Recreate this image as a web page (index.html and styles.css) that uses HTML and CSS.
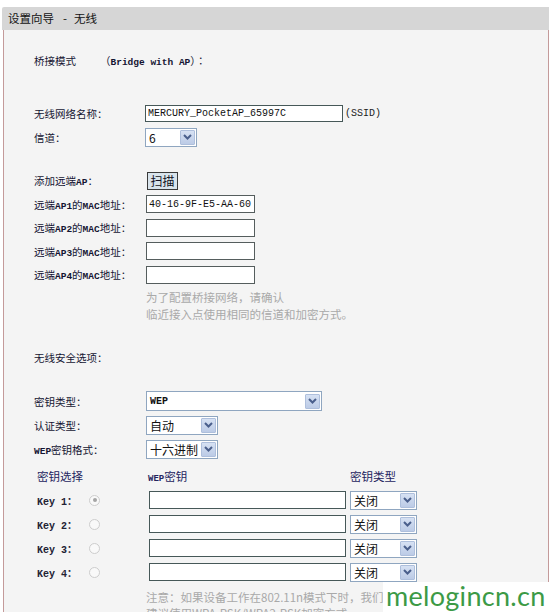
FILE: index.html
```html
<!DOCTYPE html>
<html lang="zh-CN">
<head>
<meta charset="utf-8">
<title>设置向导 - 无线</title>
<link rel="stylesheet" href="styles.css">
</head>
<body>
<div class="frame">
  <div class="header">设置向导<span class="dash">-</span>无线</div>
  <div class="panel">
    <div class="row">
      <span class="lbl lbl-title">桥接模式</span>
      <span class="bridge">（<span class="lat">Bridge with AP</span>）：</span>
    </div>

    <div class="row mt-ssid">
      <span class="lbl">无线网络名称：</span>
      <input class="txt ssid" type="text" value="MERCURY_PocketAP_65997C">
      <span class="suffix">(SSID)</span>
    </div>
    <div class="row">
      <span class="lbl">信道：</span>
      <div class="sel sel-ch"><span class="val">6</span><span class="btn"><svg width="9" height="6" viewBox="0 0 9 6"><path d="M1 1 L4.5 4.5 L8 1" fill="none" stroke="#4a5f8c" stroke-width="2"/></svg></span></div>
    </div>

    <div class="row row-s mt-scan">
      <span class="lbl">添加远端<span class="lat">AP</span>：</span>
      <span class="scan">扫描</span>
    </div>
    <div class="row row-s">
      <span class="lbl">远端<span class="lat">AP1</span>的<span class="lat">MAC</span>地址：</span>
      <input class="txt mac" type="text" value="40-16-9F-E5-AA-60">
    </div>
    <div class="row row-s">
      <span class="lbl">远端<span class="lat">AP2</span>的<span class="lat">MAC</span>地址：</span>
      <input class="txt mac" type="text" value="">
    </div>
    <div class="row row-s">
      <span class="lbl">远端<span class="lat">AP3</span>的<span class="lat">MAC</span>地址：</span>
      <input class="txt mac" type="text" value="">
    </div>
    <div class="row row-s">
      <span class="lbl">远端<span class="lat">AP4</span>的<span class="lat">MAC</span>地址：</span>
      <input class="txt mac" type="text" value="">
    </div>
    <div class="hint">
      <div>为了配置桥接网络，请确认</div>
      <div>临近接入点使用相同的信道和加密方式。</div>
    </div>

    <div class="row mt-sec">
      <span class="lbl">无线安全选项：</span>
    </div>

    <div class="row mt-type">
      <span class="lbl">密钥类型：</span>
      <div class="sel sel-wep"><span class="val val-lat">WEP</span><span class="btn"><svg width="9" height="6" viewBox="0 0 9 6"><path d="M1 1 L4.5 4.5 L8 1" fill="none" stroke="#4a5f8c" stroke-width="2"/></svg></span></div>
    </div>
    <div class="row">
      <span class="lbl">认证类型：</span>
      <div class="sel sel-mid"><span class="val">自动</span><span class="btn"><svg width="9" height="6" viewBox="0 0 9 6"><path d="M1 1 L4.5 4.5 L8 1" fill="none" stroke="#4a5f8c" stroke-width="2"/></svg></span></div>
    </div>
    <div class="row">
      <span class="lbl"><span class="lat">WEP</span>密钥格式：</span>
      <div class="sel sel-mid"><span class="val">十六进制</span><span class="btn"><svg width="9" height="6" viewBox="0 0 9 6"><path d="M1 1 L4.5 4.5 L8 1" fill="none" stroke="#4a5f8c" stroke-width="2"/></svg></span></div>
    </div>

    <div class="row keyhead">
      <span class="kh-sel">密钥选择</span>
      <span class="kh-key"><span class="lat">WEP</span>密钥</span>
      <span class="kh-type">密钥类型</span>
    </div>
    <div class="row keyrow">
      <span class="klbl">Key 1<span class="kcolon">：</span></span>
      <span class="radio checked"></span>
      <input class="txt key" type="text" value="">
      <div class="sel sel-key"><span class="val">关闭</span><span class="btn"><svg width="9" height="6" viewBox="0 0 9 6"><path d="M1 1 L4.5 4.5 L8 1" fill="none" stroke="#4a5f8c" stroke-width="2"/></svg></span></div>
    </div>
    <div class="row keyrow">
      <span class="klbl">Key 2<span class="kcolon">：</span></span>
      <span class="radio"></span>
      <input class="txt key" type="text" value="">
      <div class="sel sel-key"><span class="val">关闭</span><span class="btn"><svg width="9" height="6" viewBox="0 0 9 6"><path d="M1 1 L4.5 4.5 L8 1" fill="none" stroke="#4a5f8c" stroke-width="2"/></svg></span></div>
    </div>
    <div class="row keyrow">
      <span class="klbl">Key 3<span class="kcolon">：</span></span>
      <span class="radio"></span>
      <input class="txt key" type="text" value="">
      <div class="sel sel-key"><span class="val">关闭</span><span class="btn"><svg width="9" height="6" viewBox="0 0 9 6"><path d="M1 1 L4.5 4.5 L8 1" fill="none" stroke="#4a5f8c" stroke-width="2"/></svg></span></div>
    </div>
    <div class="row keyrow">
      <span class="klbl">Key 4<span class="kcolon">：</span></span>
      <span class="radio"></span>
      <input class="txt key" type="text" value="">
      <div class="sel sel-key"><span class="val">关闭</span><span class="btn"><svg width="9" height="6" viewBox="0 0 9 6"><path d="M1 1 L4.5 4.5 L8 1" fill="none" stroke="#4a5f8c" stroke-width="2"/></svg></span></div>
    </div>
    <div class="note">注意：如果设备工作在802.11n模式下时，我们<br>建议使用WPA-PSK/WPA2-PSK加密方式。</div>
  </div>
</div>
<div class="watermark">melogincn.cn</div>
</body>
</html>
```

FILE: styles.css
```css
html, body {
  margin: 0;
  padding: 0;
  height: 612px;
  overflow: hidden;
  background: #ffffff;
}

body {
  position: relative;
  font-family: "Noto Sans CJK TC", "Noto Sans CJK SC", "Noto Sans", sans-serif;
  color: #141432;
}

.frame {
  margin: 7px 0 0 2px;
  width: 547px;
}

.header {
  height: 23px;
  line-height: 23px;
  background: #d6d6d6;
  padding-left: 6px;
  font-size: 11.5px;
  color: #111111;
  border-radius: 2px 0 0 0;
}

.dash {
  margin: 0 7px 0 9px;
}

.panel {
  margin-left: 1px;
  height: 582px;
  overflow: hidden;
  background: #f4f4f4;
  border-left: 1px solid #c49a9a;
  border-right: 1px solid #c49a9a;
  padding: 18px 0 0 30px;
  box-sizing: border-box;
}

.row {
  display: flex;
  align-items: center;
  height: 24px;
  font-size: 10.5px;
}

.row-s {
  height: 23.5px;
}

.lbl {
  width: 111px;
  flex-shrink: 0;
  white-space: nowrap;
}

.lbl-title {
  width: 66px;
}

.lat {
  font-family: "Liberation Mono", monospace;
  font-weight: bold;
  font-size: 9.5px;
}

.bridge .lat {
  font-size: 9.5px;
}

.mt-ssid { margin-top: 29px; }
.mt-scan { margin-top: 20px; }
.mt-sec { margin-top: 22.5px; }
.mt-type { margin-top: 20px; }

.txt {
  box-sizing: border-box;
  margin: 0;
  padding: 0 0 0 2px;
  background: #ffffff;
  border: 1px solid #465858;
  font-family: "Liberation Mono", monospace;
  font-size: 10px;
  color: #111111;
  outline: none;
}

.ssid {
  width: 198px;
  height: 17px;
}

.suffix {
  margin-left: 2px;
  font-family: "Liberation Mono", monospace;
  font-size: 10px;
  color: #222222;
}

.mac {
  margin-left: 1px;
  width: 109px;
  height: 18px;
  font-size: 10px;
  border-color: #555d5d;
}

.scan {
  margin-left: 2px;
  box-sizing: border-box;
  width: 31px;
  height: 18px;
  line-height: 16px;
  text-align: center;
  font-size: 12px;
  color: #111122;
  background: #d9e4ec;
  border: 1px solid #3a3a3a;
}

.hint {
  margin: 2px 0 0 112px;
  font-size: 11.5px;
  line-height: 17px;
  color: #a9a9a9;
}

.sel {
  box-sizing: border-box;
  display: flex;
  align-items: center;
  justify-content: space-between;
  height: 19px;
  background: #ffffff;
  border: 1px solid #8fa6c0;
  padding: 0 1px 0 3px;
  margin-left: 1px;
}

.sel .val {
  font-size: 12px;
  color: #111111;
  white-space: nowrap;
}

.sel .val-lat {
  font-family: "Liberation Mono", monospace;
  font-weight: bold;
  font-size: 10px;
}

.sel .btn {
  box-sizing: border-box;
  width: 15px;
  height: 15px;
  display: flex;
  align-items: center;
  justify-content: center;
  background: linear-gradient(#d6e1f3, #bccbe6);
  border: 1px solid #aebfdc;
  border-radius: 1px;
}

.sel-ch {
  margin-left: 0;
  width: 52px;
}

.sel-wep {
  width: 176px;
  height: 20px;
}

.sel-mid {
  width: 72px;
}

.keyhead {
  margin-top: 3px;
  font-size: 11.5px;
  color: #24245e;
}

.kh-sel {
  margin-left: 3px;
  width: 111px;
}

.kh-key {
  width: 202px;
}

.kh-key .lat {
  font-size: 9px;
}

.klbl {
  margin-left: 3px;
  width: 52px;
  font-family: "Liberation Mono", monospace;
  font-weight: bold;
  font-size: 10px;
  color: #222233;
  white-space: nowrap;
}

.kcolon {
  font-family: "Noto Sans CJK TC", sans-serif;
  font-weight: bold;
}

.radio {
  box-sizing: border-box;
  width: 11px;
  height: 11px;
  border-radius: 50%;
  border: 1px solid #cdcdcd;
  background: #f9f9f9;
  display: flex;
  align-items: center;
  justify-content: center;
  flex-shrink: 0;
}

.radio.checked::after {
  content: "";
  width: 4px;
  height: 4px;
  border-radius: 50%;
  background: #a5a5a5;
}

.key {
  margin-left: 49px;
  width: 197px;
  height: 18px;
}

.sel-key {
  margin-left: 4px;
  width: 67px;
}

.note {
  margin: 5px 0 0 112px;
  font-size: 11.5px;
  line-height: 16px;
  color: #a9a9a9;
  white-space: nowrap;
}

.watermark {
  position: absolute;
  left: 383px;
  top: 582px;
  width: 171px;
  height: 30px;
  background: #ffffff;
  font-family: "Lato", "Open Sans", sans-serif;
  font-size: 27px;
  line-height: 28px;
  letter-spacing: 0.3px;
  color: #3c9a46;
  padding-left: 3px;
  box-sizing: border-box;
  white-space: nowrap;
  overflow: hidden;
}
```
